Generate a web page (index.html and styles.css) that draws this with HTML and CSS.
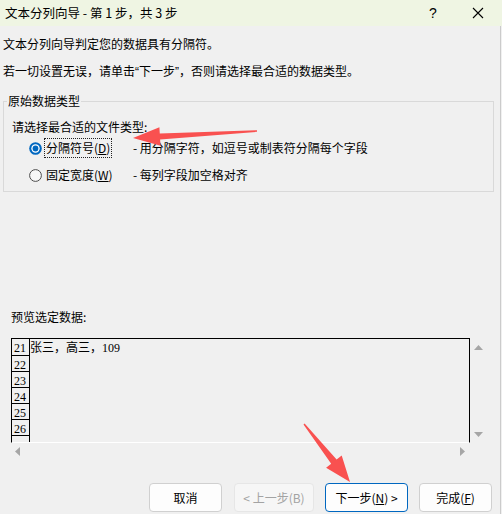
FILE: index.html
```html
<!DOCTYPE html>
<html lang="zh-CN">
<head>
<meta charset="utf-8">
<title>文本分列向导</title>
<link rel="stylesheet" href="styles.css">
</head>
<body>
<div class="window">
  <header class="titlebar">
    <span class="title">文本分列向导 - 第 1 步，共 3 步</span>
    <span class="ctrl help">?</span>
    <span class="ctrl close"><svg width="12" height="12" viewBox="0 0 12 12"><path d="M1 1 L11 11 M11 1 L1 11" stroke="#000" stroke-width="1.1" fill="none"/></svg></span>
  </header>
  <div class="frame">
    <main class="content">
      <p class="line first">文本分列向导判定您的数据具有分隔符。</p>
      <p class="line second">若一切设置无误，请单击<span class="q">“</span>下一步<span class="q">”</span>，否则请选择最合适的数据类型。</p>
      <fieldset class="group">
        <legend>原始数据类型</legend>
        <div class="prompt">请选择最合适的文件类型:</div>
        <div class="opt">
          <svg class="radio" width="13" height="13" viewBox="0 0 13 13"><circle cx="6.5" cy="6.5" r="6.3" fill="#0067c0"/><circle cx="6.5" cy="6.5" r="4.2" fill="#fff"/><circle cx="6.5" cy="6.5" r="2.9" fill="#0067c0"/></svg>
          <span class="label-wrap"><span class="label focus">分隔符号(<u>D</u>)</span></span>
          <span class="desc">- 用分隔字符，如逗号或制表符分隔每个字段</span>
        </div>
        <div class="opt opt2">
          <svg class="radio" width="13" height="13" viewBox="0 0 13 13"><circle cx="6.5" cy="6.5" r="5.9" fill="#f7f7f7" stroke="#4c4c4c" stroke-width="1"/></svg>
          <span class="label-wrap"><span class="label">固定宽度(<u>W</u>)</span></span>
          <span class="desc">- 每列字段加空格对齐</span>
        </div>
      </fieldset>
      <div class="preview-label">预览选定数据:</div>
      <div class="preview">
        <div class="data">
          <div class="row r1"><span class="num">21</span><span class="cell">张三，高三，<span class="digits">109</span></span></div>
          <div class="row"><span class="num">22</span><span class="cell"></span></div>
          <div class="row"><span class="num">23</span><span class="cell"></span></div>
          <div class="row"><span class="num">24</span><span class="cell"></span></div>
          <div class="row"><span class="num">25</span><span class="cell"></span></div>
          <div class="row"><span class="num">26</span><span class="cell"></span></div>
          <div class="row"><span class="num"></span><span class="cell"></span></div>
        </div>
        <div class="vscroll">
          <svg width="9" height="5" viewBox="0 0 9 5"><path d="M4.5 0 L9 5 L0 5 Z" fill="#a6a6a6"/></svg>
          <svg width="9" height="5" viewBox="0 0 9 5"><path d="M0 0 L9 0 L4.5 5 Z" fill="#a6a6a6"/></svg>
        </div>
        <div class="hscroll">
          <svg width="5" height="9" viewBox="0 0 5 9"><path d="M5 0 L5 9 L0 4.5 Z" fill="#a6a6a6"/></svg>
          <svg width="5" height="9" viewBox="0 0 5 9"><path d="M0 0 L5 4.5 L0 9 Z" fill="#a6a6a6"/></svg>
        </div>
        <div class="corner"></div>
      </div>
    </main>
    <footer class="buttons">
      <button class="btn cancel">取消</button>
      <button class="btn prev" disabled>&lt; 上一步(B)</button>
      <button class="btn next">下一步(<u>N</u>) &gt;</button>
      <button class="btn finish">完成(<u>F</u>)</button>
    </footer>
  </div>
  <svg class="annot" width="502" height="514" viewBox="0 0 502 514">
    <polygon points="133,138 159.4,127.2 159.8,133.4 257,130.2 257,131.8 160.1,139.6 160.6,145.8" fill="#f95150"/>
    <polygon points="350,482 341.7,455.4 336.6,459.4 304.6,423.5 303.5,424.5 331.2,463.8 326.1,467.8" fill="#f95150"/>
  </svg>
</div>
</body>
</html>
```
FILE: styles.css
```css
* { box-sizing: border-box; }
html, body { margin: 0; padding: 0; }
body {
  background: #f0f0f0;
  font-family: "Noto Sans CJK SC", "Noto Sans", sans-serif;
  font-size: 12px;
  color: #000;
}
.window {
  position: relative;
  width: 502px;
  height: 514px;
  overflow: hidden;
  background: #f0f0f0;
}
.titlebar {
  height: 26px;
  background: #eff5e3;
  display: flex;
  align-items: center;
  padding-left: 5px;
}
.title {
  flex: 1;
  font-size: 12.5px;
  line-height: 16px;
}
.ctrl {
  width: 16px;
  height: 16px;
  display: flex;
  align-items: center;
  justify-content: center;
}
.help {
  font-family: "Liberation Sans", sans-serif;
  font-size: 14px;
  margin-right: 29px;
}
.close { margin-right: 16px; }
.frame {
  width: 501px;
  height: 488px;
  border-right: 1px solid #cbcbcb;
}
.content {
  padding: 0 0 0 3px;
}
.line {
  margin: 0;
  line-height: 16px;
}
.q {
  font-family: "Liberation Sans", sans-serif;
}
.first { padding-top: 10px; }
.second { margin-top: 11px; }
.group {
  margin: 13px 0 0 0;
  width: 491px;
  border: 1px solid #d9d9d9;
  padding: 10px 0 6px 8px;
  min-width: 0;
}
.group legend {
  padding: 0 1px;
  margin-left: -5px;
  line-height: 16px;
}
.prompt { line-height: 16px; }
.opt {
  display: flex;
  align-items: center;
  height: 20px;
  margin-top: 3px;
  padding-left: 17px;
}
.opt2 { margin-top: 7px; }
.radio { flex: none; }
.label-wrap {
  width: 89px;
  margin-left: 2px;
  flex: none;
}
.label {
  display: inline-block;
  border: 1px dotted transparent;
  padding: 0 1px;
  line-height: 18px;
}
.label.focus { border-color: #222; }
.desc { line-height: 16px; }
.preview-label {
  margin: 117px 0 0 8px;
  line-height: 16px;
}
.preview {
  margin: 13px 0 0 8px;
  display: grid;
  grid-template-columns: 459px 17px;
  grid-template-rows: 105px 17px;
}
.data {
  border-top: 1px solid #000;
  border-left: 1px solid #000;
  border-right: 1px solid #000;
  border-bottom: 1px solid #fff;
  overflow: hidden;
}
.row {
  display: flex;
  height: 16px;
}
.row.r1 { height: 17px; }
.num {
  width: 18px;
  flex: none;
  border-right: 1px solid #000;
  border-bottom: 1px solid #000;
  font-family: "Liberation Serif", serif;
  font-size: 12px;
  line-height: 19px;
  padding-left: 2px;
  overflow: hidden;
}
.row:last-child .num { height: 20px; border-bottom: none; }
.cell {
  flex: 1;
  font-family: "Noto Sans CJK SC", sans-serif;
  font-size: 12px;
  line-height: 16px;
  white-space: nowrap;
}
.digits {
  font-family: "Liberation Serif", serif;
}
.vscroll {
  display: flex;
  flex-direction: column;
  justify-content: space-between;
  align-items: center;
  padding: 7px 0 6px;
}
.hscroll {
  display: flex;
  justify-content: space-between;
  align-items: center;
  padding: 0 5px 0 4px;
}
.buttons {
  margin-top: 23px;
  display: flex;
  justify-content: flex-end;
  gap: 11px;
  padding-right: 8px;
}
.btn {
  height: 29px;
  border: 1px solid #d0d0d0;
  border-radius: 4px;
  background: #fdfdfd;
  font-family: "Noto Sans CJK SC", sans-serif;
  font-size: 12px;
  color: #000;
  padding: 0;
  line-height: 16px;
}
.cancel { width: 73px; margin-right: 1px; }
.prev {
  width: 80px;
  background: #f6f6f6;
  border-color: #e6e6e6;
  color: #a3a3a3;
}
.next {
  width: 83px;
  border-color: #0067c0;
}
.finish { width: 73px; }
.annot {
  position: absolute;
  left: 0;
  top: 0;
  pointer-events: none;
}
```
